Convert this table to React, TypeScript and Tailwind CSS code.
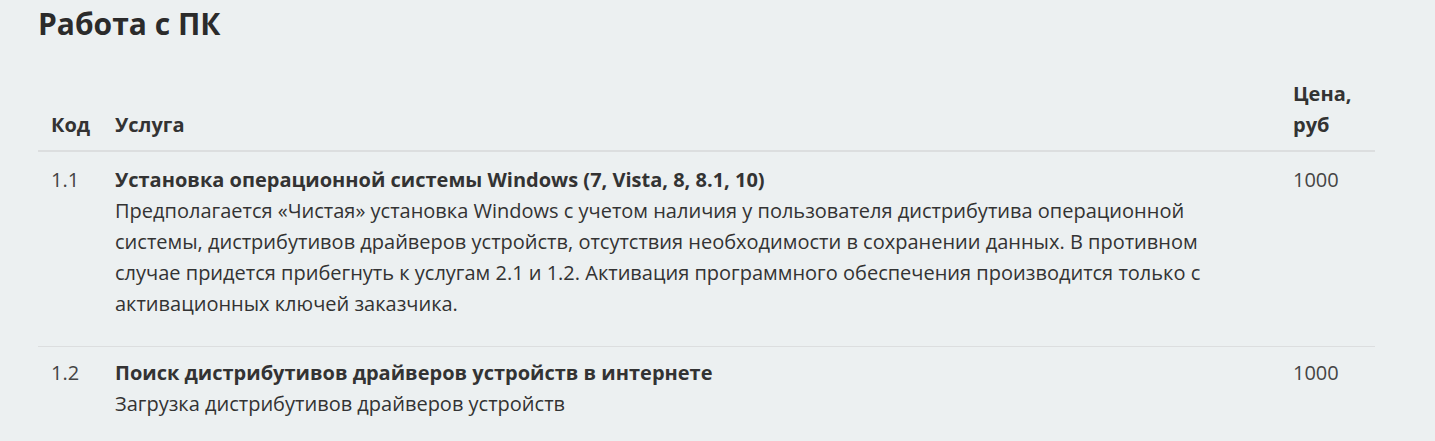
const rows = [
    {
        code: '1.1',
        title: 'Установка операционной системы Windows (7, Vista, 8, 8.1, 10)',
        text: 'Предполагается «Чистая» установка Windows с учетом наличия у пользователя дистрибутива операционной системы, дистрибутивов драйверов устройств, отсутствия необходимости в сохранении данных. В противном случае придется прибегнуть к услугам 2.1 и 1.2. Активация программного обеспечения производится только с активационных ключей заказчика.',
        price: '1000'
    },
    {
        code: '1.2',
        title: 'Поиск дистрибутивов драйверов устройств в интернете',
        text: 'Загрузка дистрибутивов драйверов устройств',
        price: '1000'
    }
];

export default function App() {
    return (
        <div className="min-h-screen bg-[#ecf0f1] text-[#333] font-['Open_Sans',sans-serif] text-[20px] leading-[31px]">
            <div className="ml-[38px] w-[1337px] pt-[7px]">
                <h1 className="text-[30px] leading-[34px] font-bold text-[#2b2b2b]">Работа с ПК</h1>

                <table className="mt-[29px] w-full table-fixed border-collapse">
                    <thead>
                        <tr className="border-b-2 border-[#dcdedf]">
                            <th className="w-[64px] px-[13px] pt-[8px] pb-[10px] text-left align-bottom font-bold">Код</th>
                            <th className="px-[13px] pt-[8px] pb-[10px] text-left align-bottom font-bold">Услуга</th>
                            <th className="w-[95px] px-[13px] pt-[8px] pb-[10px] text-left align-bottom font-bold">Цена, руб</th>
                        </tr>
                    </thead>
                    <tbody>
                        {rows.map((row, i) => (
                            <tr key={row.code} className="border-b border-[#dcdedf]">
                                <td className={i === 0 ? 'px-[13px] pt-[12px] pb-[10px] align-top text-[#444]' : 'px-[13px] pt-[10px] pb-[10px] align-top text-[#444]'}>{row.code}</td>
                                <td className={i === 0 ? 'px-[13px] pt-[12px] pb-[10px] align-top' : 'px-[13px] pt-[10px] pb-[10px] align-top'}>
                                    <p className="font-bold">{row.title}</p>
                                    <p className="mb-[17px]">{row.text}</p>
                                </td>
                                <td className={i === 0 ? 'px-[13px] pt-[12px] pb-[10px] align-top text-[#444]' : 'px-[13px] pt-[10px] pb-[10px] align-top text-[#444]'}>{row.price}</td>
                            </tr>
                        ))}
                    </tbody>
                </table>
            </div>
        </div>
    );
}
